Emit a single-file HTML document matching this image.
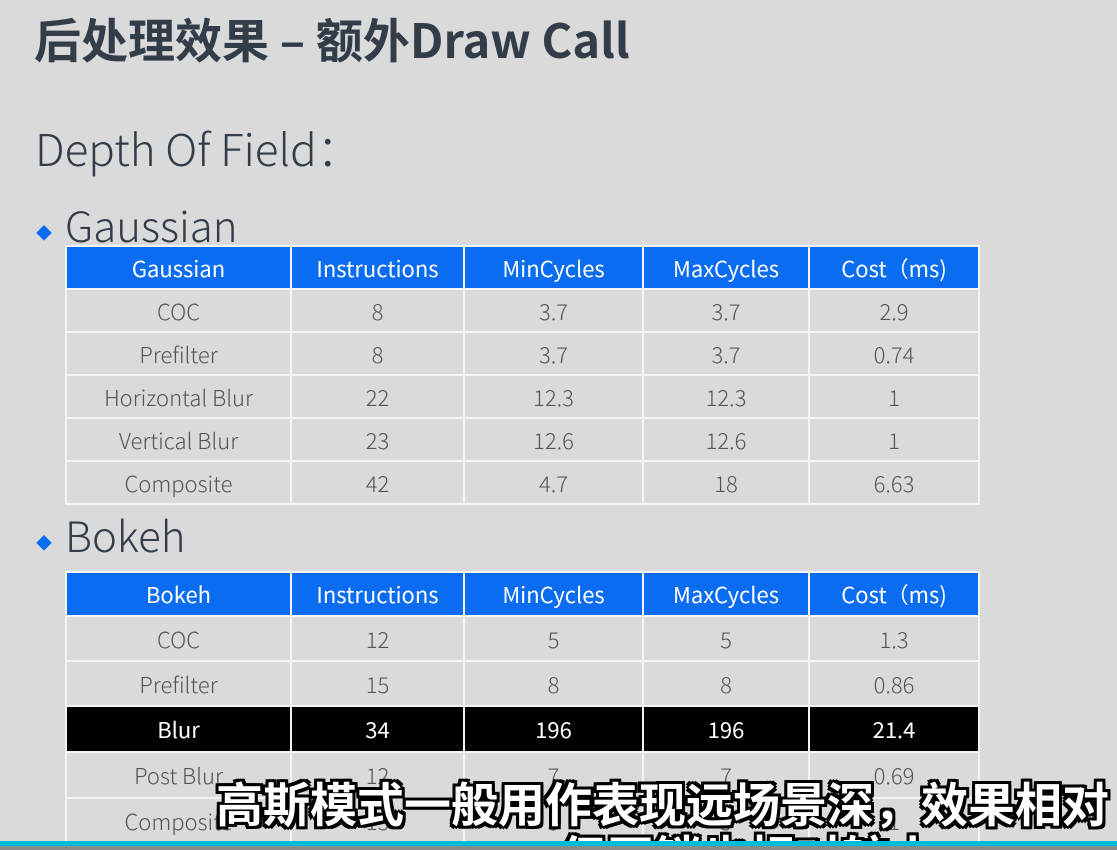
<!DOCTYPE html>
<html style="overflow:hidden;width:1117px;height:850px"><head><meta charset="utf-8"><style>
body{margin:0;width:1117px;height:850px;background:#dadada;overflow:hidden;position:relative;font-family:"Liberation Sans","Noto Sans CJK SC",sans-serif;}
.a{position:absolute;white-space:nowrap}
table{position:absolute;border-collapse:collapse;table-layout:fixed;left:65px;width:913px}
td{border:2px solid #f4f4f4;text-align:center;color:#555;font-size:22px;padding:0;font-family:"Noto Sans CJK SC","Liberation Sans",sans-serif;font-weight:300}
tr.h td{background:#0a6cf0;color:#fff;font-weight:400}
tr.k td{background:#000;color:#fff;font-weight:400}
.sub{position:absolute;white-space:nowrap;color:#fff;font-size:47px;font-weight:bold;font-family:"Noto Sans CJK SC",sans-serif;text-shadow:-3px -3px 0 #000,3px -3px 0 #000,-3px 3px 0 #000,3px 3px 0 #000,0 3px 0 #000,0 -3px 0 #000,3px 0 0 #000,-3px 0 0 #000}
</style></head><body>
<div class="a" style="left:34px;top:3px;font-size:47px;font-weight:bold;color:#333d4a;font-family:'Noto Sans CJK SC',sans-serif">后处理效果 – 额外Draw Call</div>
<div class="a" style="left:35px;top:115px;font-size:44px;color:#333d4a;font-family:'Noto Sans CJK SC',sans-serif;font-weight:300">Depth Of Field：</div>
<div class="a" style="left:36px;top:220px;font-size:16px;color:#0a6cf0">◆</div>
<div class="a" style="left:65px;top:194px;font-size:42px;color:#333d4a;font-family:'Noto Sans CJK SC',sans-serif;font-weight:300">Gaussian</div>
<div class="a" style="left:36px;top:530px;font-size:16px;color:#0a6cf0">◆</div>
<div class="a" style="left:65px;top:504px;font-size:42px;color:#333d4a;font-family:'Noto Sans CJK SC',sans-serif;font-weight:300">Bokeh</div>
<table style="top:245px"><colgroup><col style="width:225px"><col style="width:173px"><col style="width:179px"><col style="width:166px"><col style="width:170px"></colgroup>
<tr class="h" style="height:43px"><td>Gaussian</td><td>Instructions</td><td>MinCycles</td><td>MaxCycles</td><td>Cost（ms)</td></tr>
<tr style="height:43px"><td>COC</td><td>8</td><td>3.7</td><td>3.7</td><td>2.9</td></tr>
<tr style="height:43px"><td>Prefilter</td><td>8</td><td>3.7</td><td>3.7</td><td>0.74</td></tr>
<tr style="height:43px"><td>Horizontal Blur</td><td>22</td><td>12.3</td><td>12.3</td><td>1</td></tr>
<tr style="height:43px"><td>Vertical Blur</td><td>23</td><td>12.6</td><td>12.6</td><td>1</td></tr>
<tr style="height:43px"><td>Composite</td><td>42</td><td>4.7</td><td>18</td><td>6.63</td></tr>
</table>
<table style="top:571px"><colgroup><col style="width:225px"><col style="width:173px"><col style="width:179px"><col style="width:166px"><col style="width:170px"></colgroup>
<tr class="h" style="height:44px"><td>Bokeh</td><td>Instructions</td><td>MinCycles</td><td>MaxCycles</td><td>Cost（ms)</td></tr>
<tr style="height:45px"><td>COC</td><td>12</td><td>5</td><td>5</td><td>1.3</td></tr>
<tr style="height:45px"><td>Prefilter</td><td>15</td><td>8</td><td>8</td><td>0.86</td></tr>
<tr class="k" style="height:46px"><td>Blur</td><td>34</td><td>196</td><td>196</td><td>21.4</td></tr>
<tr style="height:46px"><td>Post Blur</td><td>12</td><td>7</td><td>7</td><td>0.69</td></tr>
<tr style="height:46px"><td>Composite</td><td>15</td><td>5</td><td>5</td><td>1</td></tr>
</table>
<div class="sub" style="left:216px;top:767px">高斯模式一般用作表现远场景深，效果相对</div>
<div class="sub" style="left:560px;top:820px">但开销也相对较小</div>
<div class="a" style="left:0;top:841px;width:1117px;height:5px;background:#00bcd8"></div>
<div class="a" style="left:0;top:846px;width:1117px;height:4px;background:#8a8a8a"></div>
</body></html>
